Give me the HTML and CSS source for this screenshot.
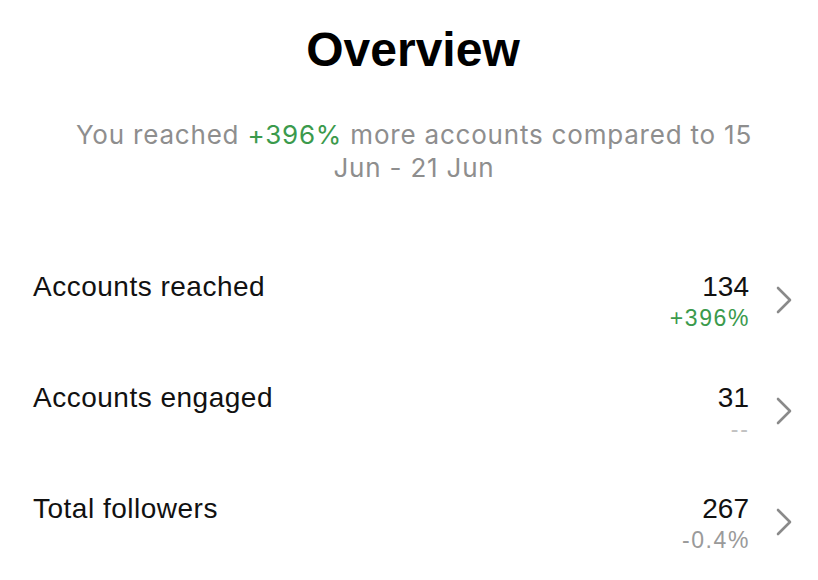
FILE: index.html
```html
<!DOCTYPE html>
<html>
<head>
<meta charset="utf-8">
<link rel="stylesheet" href="styles.css">
</head>
<body>
<div class="page">
  <h1 class="title">Overview</h1>
  <p class="summary">You reached <span class="up">+396%</span> more accounts compared to 15 Jun - 21 Jun</p>
  <div class="list">
    <div class="row">
      <div class="label">Accounts reached</div>
      <div class="values">
        <div class="num">134</div>
        <div class="delta up">+396%</div>
      </div>
      <svg class="chev" width="18" height="28" viewBox="0 0 18 28"><path d="M3 2 L15 14 L3 26" fill="none" stroke="#8a8a8a" stroke-width="2.6" stroke-linecap="round" stroke-linejoin="round"/></svg>
    </div>
    <div class="row">
      <div class="label">Accounts engaged</div>
      <div class="values">
        <div class="num">31</div>
        <div class="delta muted dash">--</div>
      </div>
      <svg class="chev" width="18" height="28" viewBox="0 0 18 28"><path d="M3 2 L15 14 L3 26" fill="none" stroke="#8a8a8a" stroke-width="2.6" stroke-linecap="round" stroke-linejoin="round"/></svg>
    </div>
    <div class="row">
      <div class="label">Total followers</div>
      <div class="values">
        <div class="num">267</div>
        <div class="delta muted">-0.4%</div>
      </div>
      <svg class="chev" width="18" height="28" viewBox="0 0 18 28"><path d="M3 2 L15 14 L3 26" fill="none" stroke="#8a8a8a" stroke-width="2.6" stroke-linecap="round" stroke-linejoin="round"/></svg>
    </div>
  </div>
</div>
</body>
</html>
```
FILE: styles.css
```css
html, body {
  margin: 0;
  padding: 0;
  background: #ffffff;
}
body {
  font-family: "Liberation Sans", Arial, sans-serif;
  color: #111111;
  width: 818px;
  height: 580px;
  overflow: hidden;
}
.page {
  padding: 22px 25px 0 33px;
  display: flex;
  flex-direction: column;
}
.title {
  margin: 0;
  text-align: center;
  font-size: 48px;
  font-weight: 700;
  line-height: 56px;
  color: #000;
}
.summary {
  margin: 40px 0 0 0;
  padding: 0 35px 0 37px;
  text-align: center;
  font-family: Inter, "Liberation Sans", sans-serif;
  font-size: 26px;
  line-height: 33px;
  letter-spacing: 0.8px;
  color: #8e8e8e;
}
.up {
  color: #3b9a4c;
}
.list {
  margin-top: 86px;
  display: flex;
  flex-direction: column;
  gap: 41px;
}
.row {
  display: flex;
  align-items: flex-start;
  height: 70px;
}
.label {
  flex: 1;
  font-size: 28px;
  line-height: 34px;
  letter-spacing: 0.5px;
  color: #111;
}
.values {
  display: flex;
  flex-direction: column;
  align-items: flex-end;
}
.num {
  font-size: 28px;
  line-height: 34px;
  color: #111;
}
.delta {
  font-size: 23px;
  line-height: 28px;
  letter-spacing: 1.6px;
  margin-right: -1px;
}
.muted {
  color: #9a9a9a;
}
.dash {
  letter-spacing: 2px;
  color: #c2c2c2;
}
.chev {
  margin: 16px 0 0 26px;
}
```
